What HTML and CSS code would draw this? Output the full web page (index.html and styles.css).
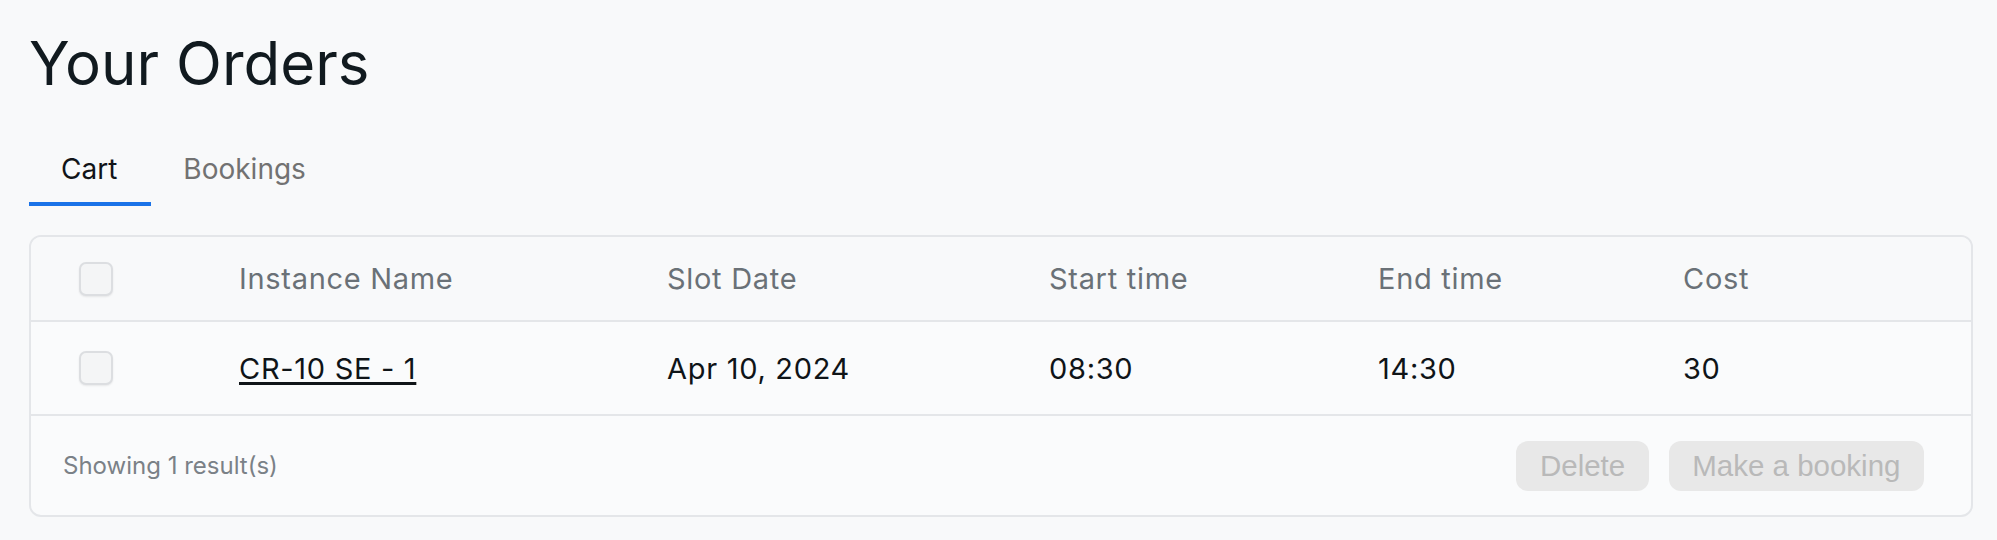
FILE: index.html
```html
<!DOCTYPE html>
<html lang="en">
<head>
<meta charset="utf-8">
<title>Your Orders</title>
<link rel="stylesheet" href="styles.css">
</head>
<body>
<main class="page">
  <h1 class="title">Your Orders</h1>
  <nav class="tabs">
    <a class="tab tab-active">Cart</a>
    <a class="tab">Bookings</a>
  </nav>
  <section class="card">
    <div class="row row-head">
      <div class="cell cell-check"><span class="checkbox"></span></div>
      <div class="cell">Instance Name</div>
      <div class="cell">Slot Date</div>
      <div class="cell">Start time</div>
      <div class="cell">End time</div>
      <div class="cell">Cost</div>
    </div>
    <div class="row row-body">
      <div class="cell cell-check"><span class="checkbox"></span></div>
      <div class="cell"><a class="link">CR-10 SE - 1</a></div>
      <div class="cell">Apr 10, 2024</div>
      <div class="cell">08:30</div>
      <div class="cell">14:30</div>
      <div class="cell">30</div>
    </div>
    <div class="footer">
      <span class="count">Showing 1 result(s)</span>
      <div class="actions">
        <button class="btn" disabled>Delete</button>
        <button class="btn" disabled>Make a booking</button>
      </div>
    </div>
  </section>
</main>
</body>
</html>
```

FILE: styles.css
```css
html, body {
  margin: 0;
  padding: 0;
  background: #f8f9fa;
}

body {
  font-family: Inter, "Noto Sans", sans-serif;
  color: #101418;
}

.page {
  padding: 0 24px 0 29px;
}

.title {
  margin: 0;
  padding-top: 27px;
  font-size: 60px;
  line-height: 72px;
  font-weight: 400;
  color: #111a1f;
}

.tabs {
  display: flex;
  margin-top: 37px;
}

.tab {
  padding: 15px 34px 15px 32px;
  font-size: 28px;
  line-height: 36px;
  color: #727272;
  border-bottom: 4px solid transparent;
}

.tab-active {
  color: #111418;
  border-bottom-color: #1a73e8;
}

.card {
  margin-top: 29px;
  border: 2px solid #e4e6e9;
  border-radius: 12px;
  background: #fafbfc;
  overflow: hidden;
}

.row {
  display: grid;
  grid-template-columns: 208px 428px 382px 329px 305px 1fr;
  align-items: center;
  border-bottom: 2px solid #e4e6e9;
  font-size: 29px;
  letter-spacing: 0.7px;
}

.row-head {
  height: 83px;
  background: #f8f9fa;
  color: #6a7177;
}

.row-body {
  height: 92px;
  color: #0f1418;
}

.cell-check {
  padding-left: 48px;
  display: flex;
  align-items: center;
}

.checkbox {
  display: block;
  box-sizing: border-box;
  width: 34px;
  height: 34px;
  border: 2px solid #dcdee1;
  border-radius: 7px;
  background: #f4f5f6;
  box-shadow: 0 1px 2px rgba(0, 0, 0, 0.08);
}

.link {
  color: #0f1418;
  text-decoration: underline;
  text-decoration-thickness: 2.5px;
  text-underline-offset: 3px;
}

.footer {
  height: 99px;
  display: flex;
  align-items: center;
  justify-content: space-between;
  padding: 0 47px 0 32px;
}

.count {
  font-size: 24px;
  color: #7a8187;
}

.actions {
  display: flex;
  gap: 20px;
}

.btn {
  height: 50px;
  padding: 0 23.5px;
  border: none;
  border-radius: 12px;
  background: #e8e8e8;
  color: #b9b9b9;
  font-family: "Liberation Sans", Arial, sans-serif;
  font-size: 29.5px;
}
```
